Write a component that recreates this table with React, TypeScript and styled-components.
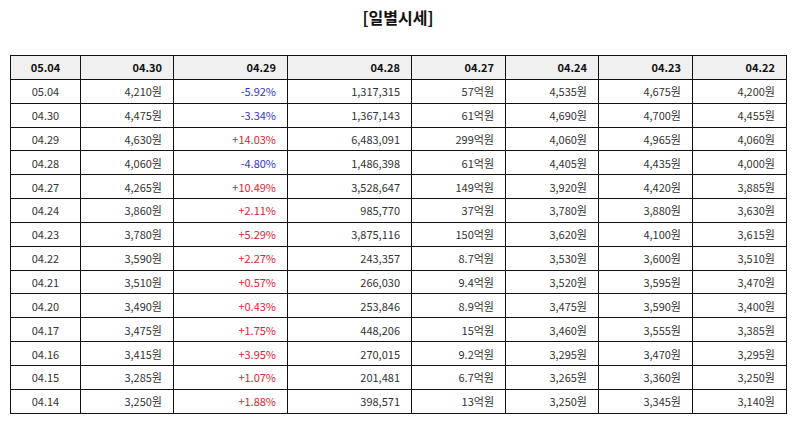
import styled, { createGlobalStyle } from 'styled-components';

type Row = {
  date: string;
  price: string;
  rate: string;
  volume: string;
  amount: string;
  open: string;
  high: string;
  low: string;
};

const headers = ['05.04', '04.30', '04.29', '04.28', '04.27', '04.24', '04.23', '04.22'];
const colWidths = [70, 93, 114, 124, 94, 93, 94, 94];

const rows: Row[] = [
  { date: '05.04', price: '4,210원', rate: '-5.92%', volume: '1,317,315', amount: '57억원', open: '4,535원', high: '4,675원', low: '4,200원' },
  { date: '04.30', price: '4,475원', rate: '-3.34%', volume: '1,367,143', amount: '61억원', open: '4,690원', high: '4,700원', low: '4,455원' },
  { date: '04.29', price: '4,630원', rate: '+14.03%', volume: '6,483,091', amount: '299억원', open: '4,060원', high: '4,965원', low: '4,060원' },
  { date: '04.28', price: '4,060원', rate: '-4.80%', volume: '1,486,398', amount: '61억원', open: '4,405원', high: '4,435원', low: '4,000원' },
  { date: '04.27', price: '4,265원', rate: '+10.49%', volume: '3,528,647', amount: '149억원', open: '3,920원', high: '4,420원', low: '3,885원' },
  { date: '04.24', price: '3,860원', rate: '+2.11%', volume: '985,770', amount: '37억원', open: '3,780원', high: '3,880원', low: '3,630원' },
  { date: '04.23', price: '3,780원', rate: '+5.29%', volume: '3,875,116', amount: '150억원', open: '3,620원', high: '4,100원', low: '3,615원' },
  { date: '04.22', price: '3,590원', rate: '+2.27%', volume: '243,357', amount: '8.7억원', open: '3,530원', high: '3,600원', low: '3,510원' },
  { date: '04.21', price: '3,510원', rate: '+0.57%', volume: '266,030', amount: '9.4억원', open: '3,520원', high: '3,595원', low: '3,470원' },
  { date: '04.20', price: '3,490원', rate: '+0.43%', volume: '253,846', amount: '8.9억원', open: '3,475원', high: '3,590원', low: '3,400원' },
  { date: '04.17', price: '3,475원', rate: '+1.75%', volume: '448,206', amount: '15억원', open: '3,460원', high: '3,555원', low: '3,385원' },
  { date: '04.16', price: '3,415원', rate: '+3.95%', volume: '270,015', amount: '9.2억원', open: '3,295원', high: '3,470원', low: '3,295원' },
  { date: '04.15', price: '3,285원', rate: '+1.07%', volume: '201,481', amount: '6.7억원', open: '3,265원', high: '3,360원', low: '3,250원' },
  { date: '04.14', price: '3,250원', rate: '+1.88%', volume: '398,571', amount: '13억원', open: '3,250원', high: '3,345원', low: '3,140원' },
];

export default function App() {
  return (
    <>
      <GlobalStyle />
      <Page>
        <Title>[일별시세]</Title>
        <PriceTable>
          <colgroup>
            {colWidths.map((w, i) => (
              <col key={i} style={{ width: w }} />
            ))}
          </colgroup>
          <thead>
            <tr>
              {headers.map((h, i) => (
                <HeadCell key={h} $center={i === 0}>
                  {h}
                </HeadCell>
              ))}
            </tr>
          </thead>
          <tbody>
            {rows.map((r) => (
              <tr key={r.date}>
                <Cell $center>{r.date}</Cell>
                <Cell>{r.price}</Cell>
                <Cell $tone={r.rate.startsWith('-') ? 'down' : 'up'}>{r.rate}</Cell>
                <Cell>{r.volume}</Cell>
                <Cell>{r.amount}</Cell>
                <Cell>{r.open}</Cell>
                <Cell>{r.high}</Cell>
                <Cell>{r.low}</Cell>
              </tr>
            ))}
          </tbody>
        </PriceTable>
      </Page>
    </>
  );
}

const GlobalStyle = createGlobalStyle`
  body {
    margin: 0;
    background: #fff;
    font-family: "Noto Sans CJK KR", "Noto Sans", sans-serif;
  }
`;

const Page = styled.div`
  width: 795px;
  padding: 0 9px 0 10px;
  box-sizing: border-box;
`;

const Title = styled.h2`
  margin: 0;
  padding-top: 6px;
  height: 55px;
  box-sizing: border-box;
  text-align: center;
  font-size: 16px;
  line-height: 22px;
  font-weight: 700;
  color: #111;
`;

const PriceTable = styled.table`
  width: 776px;
  border-collapse: collapse;
  table-layout: fixed;
  border: 1px solid #111;
`;

const HeadCell = styled.th<{ $center?: boolean }>`
  height: 22.85px;
  padding: 0 11px;
  border: 1px solid #111;
  background: #f0f0f0;
  font-size: 11px;
  font-weight: 700;
  color: #111;
  text-align: ${(p) => (p.$center ? 'center' : 'right')};
`;

const Cell = styled.td<{ $center?: boolean; $tone?: 'up' | 'down' }>`
  height: 22.85px;
  padding: 0 11px;
  border: 1px solid #111;
  font-size: 11px;
  color: ${(p) => (p.$tone === 'up' ? '#e0242f' : p.$tone === 'down' ? '#3434cc' : '#333')};
  text-align: ${(p) => (p.$center ? 'center' : 'right')};
  white-space: nowrap;
`;
